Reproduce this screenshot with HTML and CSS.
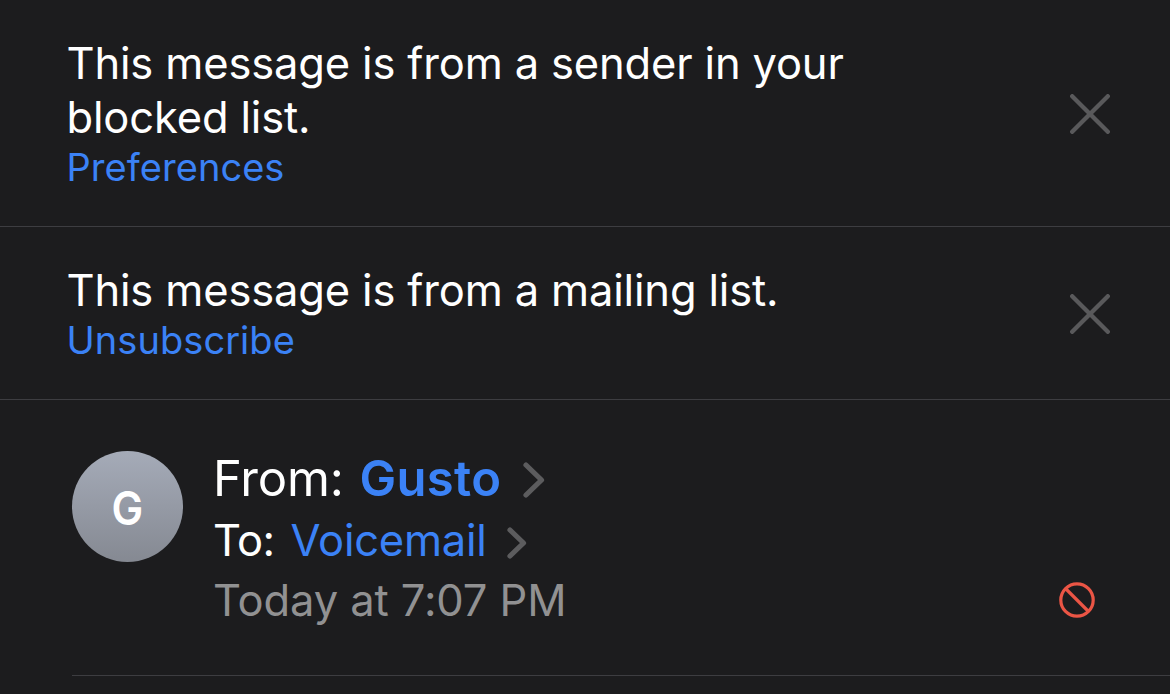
FILE: index.html
```html
<!DOCTYPE html>
<html lang="en">

<head>
    <meta charset="UTF-8">
    <meta name="viewport" content="width=device-width, initial-scale=1.0">
    <title>Message</title>
    <link rel="stylesheet" href="styles.css">
</head>

<body>
    <div class="banner">
        <div class="banner-text">
            <p>This message is from a sender in your<br>blocked list.</p>
            <a href="#">Preferences</a>
        </div>
        <button class="close" aria-label="Dismiss">
            <svg width="40" height="40" viewBox="0 0 40 40">
                <path d="M2.2 2.2 L37.8 37.8 M37.8 2.2 L2.2 37.8" />
            </svg>
        </button>
    </div>

    <div class="banner">
        <div class="banner-text">
            <p>This message is from a mailing list.</p>
            <a href="#">Unsubscribe</a>
        </div>
        <button class="close" aria-label="Dismiss">
            <svg width="40" height="40" viewBox="0 0 40 40">
                <path d="M2.2 2.2 L37.8 37.8 M37.8 2.2 L2.2 37.8" />
            </svg>
        </button>
    </div>

    <div class="header">
        <div class="avatar"><span>G</span></div>
        <div class="details">
            <div class="from">
                <span class="label">From:</span>
                <a href="#">Gusto</a>
                <svg class="chevron" width="22" height="36" viewBox="0 0 22 36">
                    <path d="M3 3 L18.5 18 L3 33" />
                </svg>
            </div>
            <div class="to">
                <span class="label">To:</span>
                <a href="#">Voicemail</a>
                <svg class="chevron" width="20" height="32" viewBox="0 0 20 32">
                    <path d="M3 3 L16.5 16 L3 29" />
                </svg>
            </div>
            <div class="date">Today at 7:07 PM</div>
        </div>
        <svg class="blocked" width="36" height="36" viewBox="0 0 36 36">
            <circle cx="18" cy="18" r="16.2" />
            <path d="M6.5 6.5 L29.5 29.5" />
        </svg>
    </div>
</body>

</html>
```
FILE: styles.css
```css
body {
    margin: 0;
    height: 694px;
    overflow: hidden;
    background-color: #1c1c1e;
    color: white;
    font-family: Inter, sans-serif;
}

a {
    color: #3b82f6;
    text-decoration: none;
}

.banner {
    box-sizing: border-box;
    display: flex;
    justify-content: space-between;
    align-items: center;
    padding: 36px 60px 36px 66.5px;
    border-bottom: 1px solid #3d3d41;
    height: 227px;
}

.banner + .banner {
    height: 173px;
}

.banner p {
    margin: 0;
    font-size: 43.5px;
    line-height: 54px;
    letter-spacing: -0.16px;
}

.banner a {
    display: block;
    font-size: 38px;
    line-height: 46px;
    letter-spacing: 0.05px;
}

.close {
    display: flex;
    padding: 2px 0 0;
    border: none;
    background: none;
}

.close path {
    stroke: #59595b;
    stroke-width: 4.3;
    stroke-linecap: round;
}

.header {
    box-sizing: border-box;
    display: flex;
    height: 276px;
    margin-left: 72px;
    padding: 51px 75px 0 0;
    border-bottom: 1px solid #3d3d41;
}

.avatar {
    display: flex;
    align-items: center;
    justify-content: center;
    width: 111px;
    height: 111px;
    border-radius: 50%;
    background: linear-gradient(#a5abb8, #858992);
    font-size: 46px;
    font-weight: 600;
}

.avatar span {
    padding-top: 2px;
    transform: scaleX(0.92);
}

.details {
    flex: 1;
    margin: -2px 0 0 30px;
}

.from,
.to {
    display: flex;
    align-items: center;
}

.from {
    height: 58px;
    font-size: 49px;
}

.from .label {
    letter-spacing: -0.2px;
}

.from a {
    margin: 0 22px 0 16px;
    font-weight: 600;
    letter-spacing: 0.3px;
}

.from .chevron {
    margin-top: 4px;
}

.to {
    height: 66px;
    font-size: 43.5px;
}

.to .label {
    letter-spacing: -0.6px;
}

.to a {
    margin: 0 20px 0 16px;
    letter-spacing: -0.25px;
}

.to .chevron {
    margin-top: 5px;
}

.date {
    font-size: 43.5px;
    line-height: 55px;
    letter-spacing: -0.1px;
    color: #919192;
}

.chevron {
    fill: none;
    stroke: #5c5c5e;
    stroke-width: 5.2;
    stroke-linecap: round;
    stroke-linejoin: round;
}

.blocked {
    margin-top: 131px;
    fill: none;
    stroke: #eb5545;
    stroke-width: 3.2;
}
```
